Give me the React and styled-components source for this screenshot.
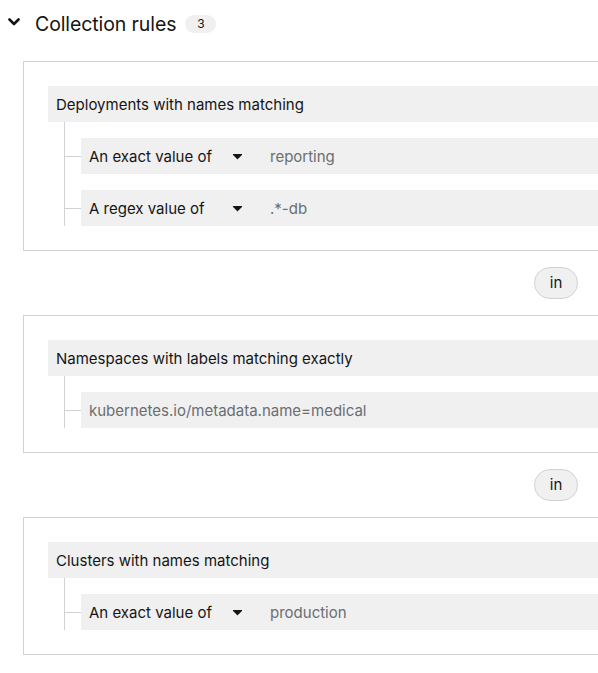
import React from 'react';
import styled, { createGlobalStyle } from 'styled-components';

const Global = createGlobalStyle`
  html, body {
    margin: 0;
    padding: 0;
    background: #fff;
    overflow: hidden;
  }
  body {
    font-family: Inter, "Open Sans", "Liberation Sans", sans-serif;
    color: #151515;
  }
`;

const Page = styled.div`
  width: 598px;
  padding: 13px 0 0 0;
  box-sizing: border-box;
`;

const Heading = styled.div`
  display: flex;
  align-items: center;
  height: 22px;
  padding-left: 8px;
`;

const Toggle = styled.span`
  display: flex;
  width: 12px;
  height: 8px;
  margin-right: 15px;
  margin-top: -4px;
  color: #151515;
`;

const Title = styled.h2`
  margin: 0;
  font-size: 19.5px;
  font-weight: 400;
  letter-spacing: -0.1px;
  line-height: 22px;
`;

const Badge = styled.span`
  margin-left: 9px;
  min-width: 31px;
  height: 18px;
  border-radius: 9px;
  background: #f0f0f0;
  font-size: 12px;
  line-height: 18px;
  text-align: center;
  box-sizing: border-box;
`;

const Rules = styled.div`
  display: flex;
  flex-direction: column;
  align-items: flex-end;
  margin: 26px 0 0 23px;
  width: 555px;
`;

const Card = styled.section`
  align-self: stretch;
  margin-right: -60px;
  border: 1px solid #d2d2d2;
  padding: 24px 0 24px 24px;
`;

const Header = styled.div`
  height: 36px;
  background: #f0f0f0;
  display: flex;
  align-items: center;
  padding-left: 8px;
  font-size: 15px;
`;

const Tree = styled.div`
  margin-left: 16px;
  border-left: 1px solid #d2d2d2;
  display: flex;
  flex-direction: column;
  gap: 16px;
  padding-top: 16px;
`;

const Row = styled.div`
  position: relative;
  margin-left: 16px;
  height: 36px;
  background: #f0f0f0;
  display: flex;
  align-items: center;
  padding-left: 8px;
  font-size: 15px;

  &::before {
    content: '';
    position: absolute;
    left: -16px;
    top: 18px;
    width: 16px;
    border-top: 1px solid #d2d2d2;
  }
`;

const Select = styled.span`
  display: flex;
  align-items: center;
  width: 181px;
`;

const SelectLabel = styled.span`
  width: 143px;
`;

const Value = styled.span`
  color: #6a6e73;
`;

const Conj = styled.button`
  margin: 16px 0 16px 0;
  width: 44px;
  height: 32px;
  border-radius: 16px;
  border: 1px solid #d2d2d2;
  background: #f0f0f0;
  font-family: inherit;
  font-size: 15px;
  color: #151515;
  padding: 0 0 2px;
`;

const Chevron = () => (
  <svg viewBox="0 0 12 8" width="12" height="8" fill="none">
    <polyline points="1.5,1.5 6,6 10.5,1.5" stroke="currentColor" strokeWidth="2.6" strokeLinecap="round" strokeLinejoin="round" />
  </svg>
);

const Caret = () => (
  <svg viewBox="0 0 320 512" width="11" height="16" fill="#151515">
    <path d="M31.3 192h257.3c17.8 0 26.7 21.5 14.1 34.1L174.1 354.8c-7.8 7.8-20.5 7.8-28.3 0L17.2 226.1C4.6 213.5 13.5 192 31.3 192z" />
  </svg>
);

const rules = [
  {
    title: 'Deployments with names matching',
    rows: [
      { select: 'An exact value of', value: 'reporting' },
      { select: 'A regex value of', value: '.*-db' },
    ],
  },
  {
    title: 'Namespaces with labels matching exactly',
    rows: [{ value: 'kubernetes.io/metadata.name=medical' }],
  },
  {
    title: 'Clusters with names matching',
    rows: [{ select: 'An exact value of', value: 'production' }],
  },
];

export default function App() {
  return (
    <Page>
      <Global />
      <Heading>
        <Toggle>
          <Chevron />
        </Toggle>
        <Title>Collection rules</Title>
        <Badge>3</Badge>
      </Heading>
      <Rules>
        {rules.map((rule, i) => (
          <React.Fragment key={rule.title}>
            {i > 0 && <Conj>in</Conj>}
            <Card>
              <Header>{rule.title}</Header>
              <Tree>
                {rule.rows.map((row) => (
                  <Row key={row.value}>
                    {row.select && (
                      <Select>
                        <SelectLabel>{row.select}</SelectLabel>
                        <Caret />
                      </Select>
                    )}
                    <Value>{row.value}</Value>
                  </Row>
                ))}
              </Tree>
            </Card>
          </React.Fragment>
        ))}
      </Rules>
    </Page>
  );
}
